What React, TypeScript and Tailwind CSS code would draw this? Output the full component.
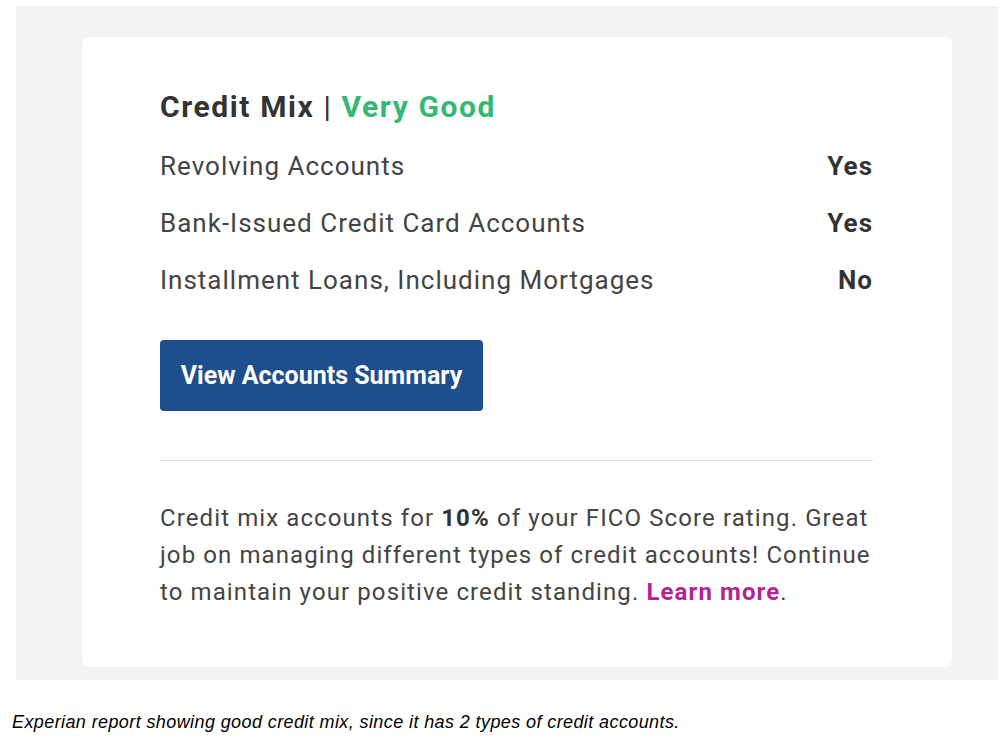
const rows = [
  { label: "Revolving Accounts", value: "Yes" },
  { label: "Bank-Issued Credit Card Accounts", value: "Yes" },
  { label: "Installment Loans, Including Mortgages", value: "No" },
];

export default function App() {
  return (
    <div className="w-[1008px] h-[738px] bg-white overflow-hidden">
      <div className="ml-4 mt-[6px] w-[982px] h-[674px] bg-[#f3f3f3] pt-[31px] pl-[66px]">
        <div className="w-[870px] h-[630px] bg-white rounded-lg pl-[78px] pr-[79px] pt-[52px] font-['Roboto',sans-serif]">
          <h2 className="text-[30px] leading-[36px] font-bold tracking-[1.6px] text-[#333333]">
            Credit Mix <span className="font-normal">|</span>{" "}
            <span className="text-[#33b875]">Very Good</span>
          </h2>
          <div className="mt-[13px] flex flex-col">
            {rows.map((r) => (
              <div
                key={r.label}
                className="flex justify-between items-center h-[57px] text-[26px] tracking-[1px] text-[#444444]"
              >
                <span>{r.label}</span>
                <span className="font-bold text-[#333333]">{r.value}</span>
              </div>
            ))}
          </div>
          <button className="mt-[31px] w-[323px] h-[71px] rounded bg-[#1f4e8c] text-white text-[25px] font-bold">
            View Accounts Summary
          </button>
          <div className="mt-[49px] border-t border-[#dddddd]" />
          <p className="mt-[39px] text-[24px] leading-[37px] tracking-[1.1px] text-[#444444] whitespace-nowrap">
            Credit mix accounts for <b className="text-[#333333]">10%</b> of your FICO Score rating. Great
            <br />
            job on managing different types of credit accounts! Continue
            <br />
            to maintain your positive credit standing.{" "}
            <a className="font-bold text-[#b4248f]">Learn more</a>.
          </p>
        </div>
      </div>
      <p className="mt-[29px] ml-3 text-[18px] tracking-[0.4px] italic text-black font-['Liberation_Sans',Arial,sans-serif]">
        Experian report showing good credit mix, since it has 2 types of credit accounts.
      </p>
    </div>
  );
}
